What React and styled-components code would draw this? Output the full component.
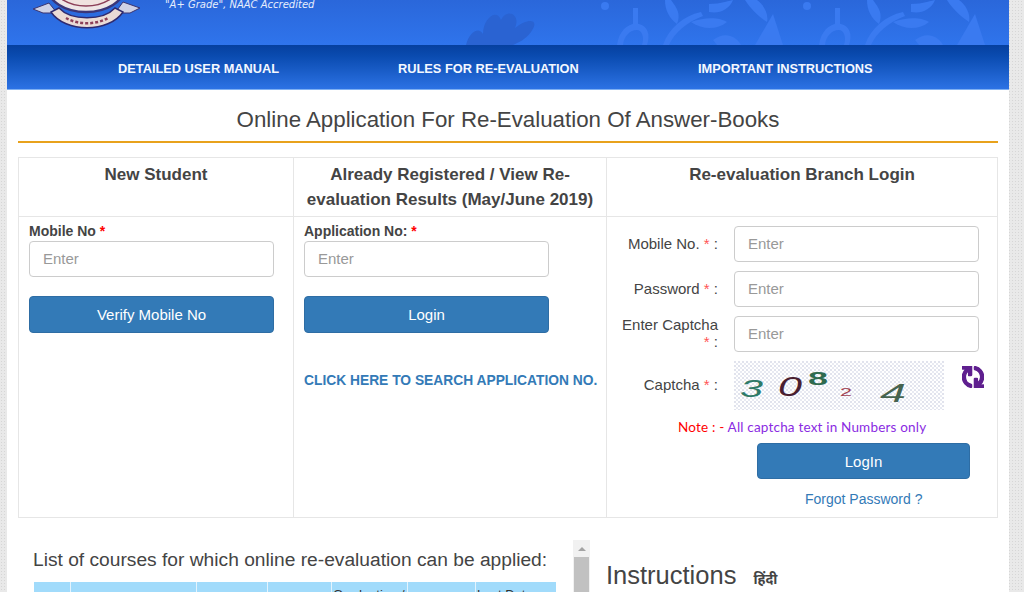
import React from "react";
import styled, { createGlobalStyle } from "styled-components";
import { FaSync } from "react-icons/fa";

const Global = createGlobalStyle`
  html, body { margin: 0; padding: 0; height: 592px; overflow: hidden; }
  body {
    font-family: "Liberation Sans", Arial, sans-serif;
    color: #444;
    background-color: #e9e9e9;
    background-image: radial-gradient(#d6d6d6 0.6px, transparent 0.8px);
    background-size: 3px 3px;
  }
  * { box-sizing: border-box; }
`;

const Page = styled.div`
  width: 1002px;
  height: 592px;
  margin-left: 7px;
  background: #fff;
  overflow: hidden;
`;

const Banner = styled.header`
  position: relative;
  height: 45px;
  background: linear-gradient(180deg, #2a67da 0%, #2f74ec 100%);
  overflow: hidden;
`;
const BannerArt = styled.svg`
  position: absolute;
  inset: 0;
  width: 100%;
  height: 100%;
`;
const Accredit = styled.span`
  position: absolute;
  left: 158px;
  top: 0;
  font-size: 10px;
  line-height: 9px;
  font-style: italic;
  font-family: "DejaVu Sans", sans-serif;
  color: #e6eefc;
  white-space: nowrap;
`;

const Nav = styled.nav`
  height: 45px;
  display: flex;
  align-items: center;
  padding: 3px 0 0 111px;
  background: linear-gradient(180deg, #06409f 0%, #0a4bb0 25%, #2c72e4 100%);
  border-bottom: 1px solid #7fb0f2;
`;
const NavLink = styled.a`
  width: ${(p) => p.$w}px;
  font-size: 12.8px;
  font-weight: bold;
  color: #f4f8ff;
  white-space: nowrap;
`;

const Title = styled.h2`
  margin: 0 11px;
  height: 53px;
  padding-top: 17px;
  border-bottom: 2px solid #e8a21c;
  font-size: 22.3px;
  line-height: 26px;
  font-weight: normal;
  text-align: center;
  color: #444;
`;

const Grid = styled.div`
  margin: 14px 11px 0;
  width: 980px;
  height: 361px;
  display: grid;
  grid-template-columns: 274px 313px 391px;
  grid-template-rows: 59px 300px;
  border: 1px solid #e6e6e6;
`;
const Head = styled.div`
  padding: 4px 6px 0;
  text-align: center;
  font-size: 17px;
  line-height: 25px;
  font-weight: bold;
  color: #444;
  border-bottom: 1px solid #e6e6e6;
  border-left: ${(p) => (p.$first ? "none" : "1px solid #e6e6e6")};
`;
const Cell = styled.div`
  padding: 6px 0 0 10px;
  border-left: ${(p) => (p.$first ? "none" : "1px solid #e6e6e6")};
`;
const BranchCell = styled.div`
  padding: 9px 0 0 0;
  border-left: 1px solid #e6e6e6;
`;

const FieldLabel = styled.label`
  display: block;
  font-size: 14px;
  line-height: 17px;
  font-weight: bold;
  color: #444;
  margin-bottom: 1px;
`;
const Req = styled.span`
  color: #f00;
`;
const Input = styled.input`
  display: block;
  width: 245px;
  height: 36px;
  padding: 0 13px 2px;
  border: 1.5px solid #ccc;
  border-radius: 4px;
  background: #fff;
  font: 15px "Liberation Sans", sans-serif;
  &::placeholder { color: #999; opacity: 1; }
`;
const Button = styled.button`
  display: block;
  width: ${(p) => p.$w || 245}px;
  height: ${(p) => p.$h || 37}px;
  margin-top: ${(p) => p.$mt || 19}px;
  margin-left: ${(p) => p.$ml || 0}px;
  border: 1px solid #2e6da4;
  border-radius: 4px;
  background: #337ab7;
  color: #fff;
  font: 15px "Liberation Sans", sans-serif;
`;
const SearchLink = styled.a`
  display: block;
  margin-top: 40px;
  font-size: 13.8px;
  font-weight: bold;
  color: #337ab7;
  white-space: nowrap;
`;

const Row = styled.div`
  display: flex;
  align-items: center;
  height: 36px;
  margin-bottom: 9px;
`;
const RowLabel = styled.div`
  width: 111px;
  margin-right: 16px;
  padding-bottom: 2px;
  text-align: right;
  font-size: 15px;
  line-height: 17px;
  color: #444;
`;
const Star = styled.span`
  color: #f55;
`;
const CaptchaRow = styled.div`
  display: flex;
  align-items: center;
  height: 49px;
`;
const Refresh = styled(FaSync)`
  width: 22px;
  height: 22px;
  margin-left: 18px;
  margin-top: -18px;
  color: #5f1f8f;
  stroke: currentColor;
  stroke-width: 30px;
  transform: rotate(90deg);
`;
const Note = styled.div`
  margin-top: 8px;
  padding-left: 71px;
  font-family: "Lato", sans-serif;
  font-size: 13.5px;
  line-height: 18px;
  letter-spacing: 0.19px;
  color: #8a2be2;
  white-space: nowrap;
`;
const NoteRed = styled.span`
  color: #f00;
`;
const Forgot = styled.a`
  display: block;
  margin-top: 11px;
  padding-left: 198px;
  font-size: 14px;
  line-height: 18px;
  color: #337ab7;
`;

const Lower = styled.section`
  display: flex;
  margin-top: 22px;
`;
const Courses = styled.div`
  width: 566px;
  padding: 9px 0 0 26px;
`;
const CoursesTitle = styled.h3`
  margin: 0 0 11px;
  font-size: 19.2px;
  line-height: 22px;
  font-weight: normal;
  color: #444;
  white-space: nowrap;
`;
const CourseTable = styled.div`
  width: 522px;
  margin-left: 1px;
  height: 40px;
  display: grid;
  grid-template-columns: 36px 126px 71px 64px 76px 68px 81px;
  background: #a1dbfb;
`;
const CourseHead = styled.div`
  border-left: ${(p) => (p.$first ? "none" : "1px solid #e3f3fd")};
  padding: 5px 0 0 1px;
  font-size: 13px;
  color: #333;
  white-space: nowrap;
`;
const Scrollbar = styled.div`
  width: 17px;
  height: 60px;
  background: #f1f1f1;
  display: flex;
  flex-direction: column;
  align-items: center;
`;
const ScrollArrow = styled.div`
  height: 17px;
  width: 100%;
  display: flex;
  align-items: center;
  justify-content: center;
  &::before {
    content: "";
    border-left: 4px solid transparent;
    border-right: 4px solid transparent;
    border-bottom: 4px solid #a3a3a3;
  }
`;
const ScrollThumb = styled.div`
  width: 15px;
  flex: 1;
  background: #c1c1c1;
`;
const Instructions = styled.div`
  margin-left: 16px;
  display: flex;
  align-items: baseline;
  padding-top: 18px;
  height: 60px;
`;
const InstrTitle = styled.h3`
  margin: 0;
  font-size: 25.5px;
  line-height: 34px;
  font-weight: normal;
  color: #444;
`;
const Hindi = styled.span`
  margin-left: 17px;
  font-family: "Noto Sans", "Noto Sans Devanagari", "Lohit Devanagari", sans-serif;
  font-size: 14px;
  font-weight: bold;
  color: #444;
`;

const Captcha = () => (
  <svg width="210" height="49" viewBox="0 0 210 49" aria-label="captcha">
    <defs>
      <pattern id="dots" width="4" height="4" patternUnits="userSpaceOnUse">
        <rect width="4" height="4" fill="#fff" />
        <circle cx="1" cy="1" r="0.8" fill="#bcc0d8" />
        <circle cx="3" cy="3" r="0.8" fill="#ccd0e2" />
      </pattern>
    </defs>
    <rect width="210" height="49" fill="url(#dots)" />
    <g fontFamily="'Liberation Sans', sans-serif">
      <text x="6" y="36" fontSize="24" fontStyle="italic" fill="#2e7a68" textLength="23" lengthAdjust="spacingAndGlyphs">3</text>
      <text x="44" y="35" fontSize="27" fontStyle="italic" fill="#4a2030" textLength="24" lengthAdjust="spacingAndGlyphs">0</text>
      <text x="74" y="24" fontSize="18" fontWeight="bold" fill="#2f6b4f" textLength="20" lengthAdjust="spacingAndGlyphs">8</text>
      <text x="106" y="35" fontSize="11" fill="#a04050" textLength="12" lengthAdjust="spacingAndGlyphs">2</text>
      <text x="146" y="41" fontSize="26" fontStyle="italic" fill="#46634f" textLength="26" lengthAdjust="spacingAndGlyphs">4</text>
    </g>
  </svg>
);

const Ornament = ({ x }) => (
  <g fill="#3a7af0" stroke="none" transform={`translate(${x} 0)`}>
    <path d="M0 45 C2 30 12 22 22 24 C30 26 34 34 30 45 L25 45 C28 36 24 30 20 30 C13 30 7 36 6 45 Z" />
    <path d="M16 8 h5 v20 h-5 z" />
    <path d="M46 45 C52 28 66 16 84 12 L86 16 C70 22 58 32 52 45 Z" />
    <path d="M54 0 C60 8 64 14 60 24 C52 18 48 10 48 0 Z" />
    <path d="M74 22 C90 16 104 18 110 22 C100 30 86 30 74 22 Z" />
    <path d="M92 4 C104 4 114 0 116 0 C112 10 102 14 92 12 Z" />
    <path d="M96 40 C106 32 118 34 124 45 L100 45 Z" />
    <path d="M128 0 C134 10 144 18 150 22 C152 14 146 4 140 0 Z" />
    <path d="M138 45 L156 14 L166 45 Z" />
    <circle cx="-12" cy="6" r="4" />
  </g>
);

const Logo = () => (
  <svg x="26" y="0" width="107" height="30" viewBox="0 0 107 30">
    <path d="M0 9 L16 3 L24 13 L10 13 Z" fill="#cfd2e6" stroke="#3a3570" />
    <path d="M107 8 L90 2 L82 13 L97 13 Z" fill="#cfd2e6" stroke="#3a3570" />
    <ellipse cx="53" cy="-12" rx="38" ry="24" fill="#efe6e6" stroke="#3b3678" strokeWidth="2.5" />
    <ellipse cx="53" cy="-14" rx="32" ry="20" fill="#f0e2df" stroke="#8c3f58" strokeWidth="1.5" />
    <path d="M18 12 C32 33 76 33 90 12 L82 8 C70 21 38 21 26 8 Z" fill="#eadbd6" stroke="#2f2a6e" strokeWidth="1.5" />
    <path d="M33 18 C45 25 63 25 75 18" fill="none" stroke="#8c3f58" strokeWidth="2.5" strokeDasharray="3 2" />
  </svg>
);

export default function App() {
  return (
    <>
      <Global />
      <Page>
        <Banner>
          <BannerArt viewBox="0 0 1002 45" preserveAspectRatio="none">
            <Logo />
            <path
              d="M459 45 C462 32 472 26 476 34 C476 18 490 8 494 20 C500 8 514 14 508 28 C520 18 534 18 524 32 C518 40 512 42 506 45 Z"
              fill="#2a63d2"
            />
            <Ornament x={610} />
            <Ornament x={812} />
          </BannerArt>
          <Accredit>"A+ Grade", NAAC Accredited</Accredit>
        </Banner>
        <Nav>
          <NavLink $w={280}>DETAILED USER MANUAL</NavLink>
          <NavLink $w={300}>RULES FOR RE-EVALUATION</NavLink>
          <NavLink $w={180}>IMPORTANT INSTRUCTIONS</NavLink>
        </Nav>
        <Title>Online Application For Re-Evaluation Of Answer-Books</Title>
        <Grid>
          <Head $first>New Student</Head>
          <Head>Already Registered / View Re-evaluation Results (May/June 2019)</Head>
          <Head>Re-evaluation Branch Login</Head>
          <Cell $first>
            <FieldLabel>Mobile No <Req>*</Req></FieldLabel>
            <Input placeholder="Enter" />
            <Button>Verify Mobile No</Button>
          </Cell>
          <Cell>
            <FieldLabel>Application No: <Req>*</Req></FieldLabel>
            <Input placeholder="Enter" />
            <Button>Login</Button>
            <SearchLink>CLICK HERE TO SEARCH APPLICATION NO.</SearchLink>
          </Cell>
          <BranchCell>
            <Row>
              <RowLabel>Mobile No. <Star>*</Star> :</RowLabel>
              <Input placeholder="Enter" />
            </Row>
            <Row>
              <RowLabel>Password <Star>*</Star> :</RowLabel>
              <Input placeholder="Enter" />
            </Row>
            <Row>
              <RowLabel>Enter Captcha <Star>*</Star>{"\u00a0"}:</RowLabel>
              <Input placeholder="Enter" />
            </Row>
            <CaptchaRow>
              <RowLabel>Captcha <Star>*</Star> :</RowLabel>
              <Captcha />
              <Refresh />
            </CaptchaRow>
            <Note><NoteRed>Note : - </NoteRed>All captcha text in Numbers only</Note>
            <Button $w={213} $h={36} $mt={7} $ml={150}>LogIn</Button>
            <Forgot>Forgot Password ?</Forgot>
          </BranchCell>
        </Grid>
        <Lower>
          <Courses>
            <CoursesTitle>List of courses for which online re-evaluation can be applied:</CoursesTitle>
            <CourseTable>
              <CourseHead $first />
              <CourseHead />
              <CourseHead />
              <CourseHead />
              <CourseHead>Graduation /</CourseHead>
              <CourseHead />
              <CourseHead>Last Date</CourseHead>
            </CourseTable>
          </Courses>
          <Scrollbar>
            <ScrollArrow />
            <ScrollThumb />
          </Scrollbar>
          <Instructions>
            <InstrTitle>Instructions</InstrTitle>
            <Hindi>हिंदी</Hindi>
          </Instructions>
        </Lower>
      </Page>
    </>
  );
}
